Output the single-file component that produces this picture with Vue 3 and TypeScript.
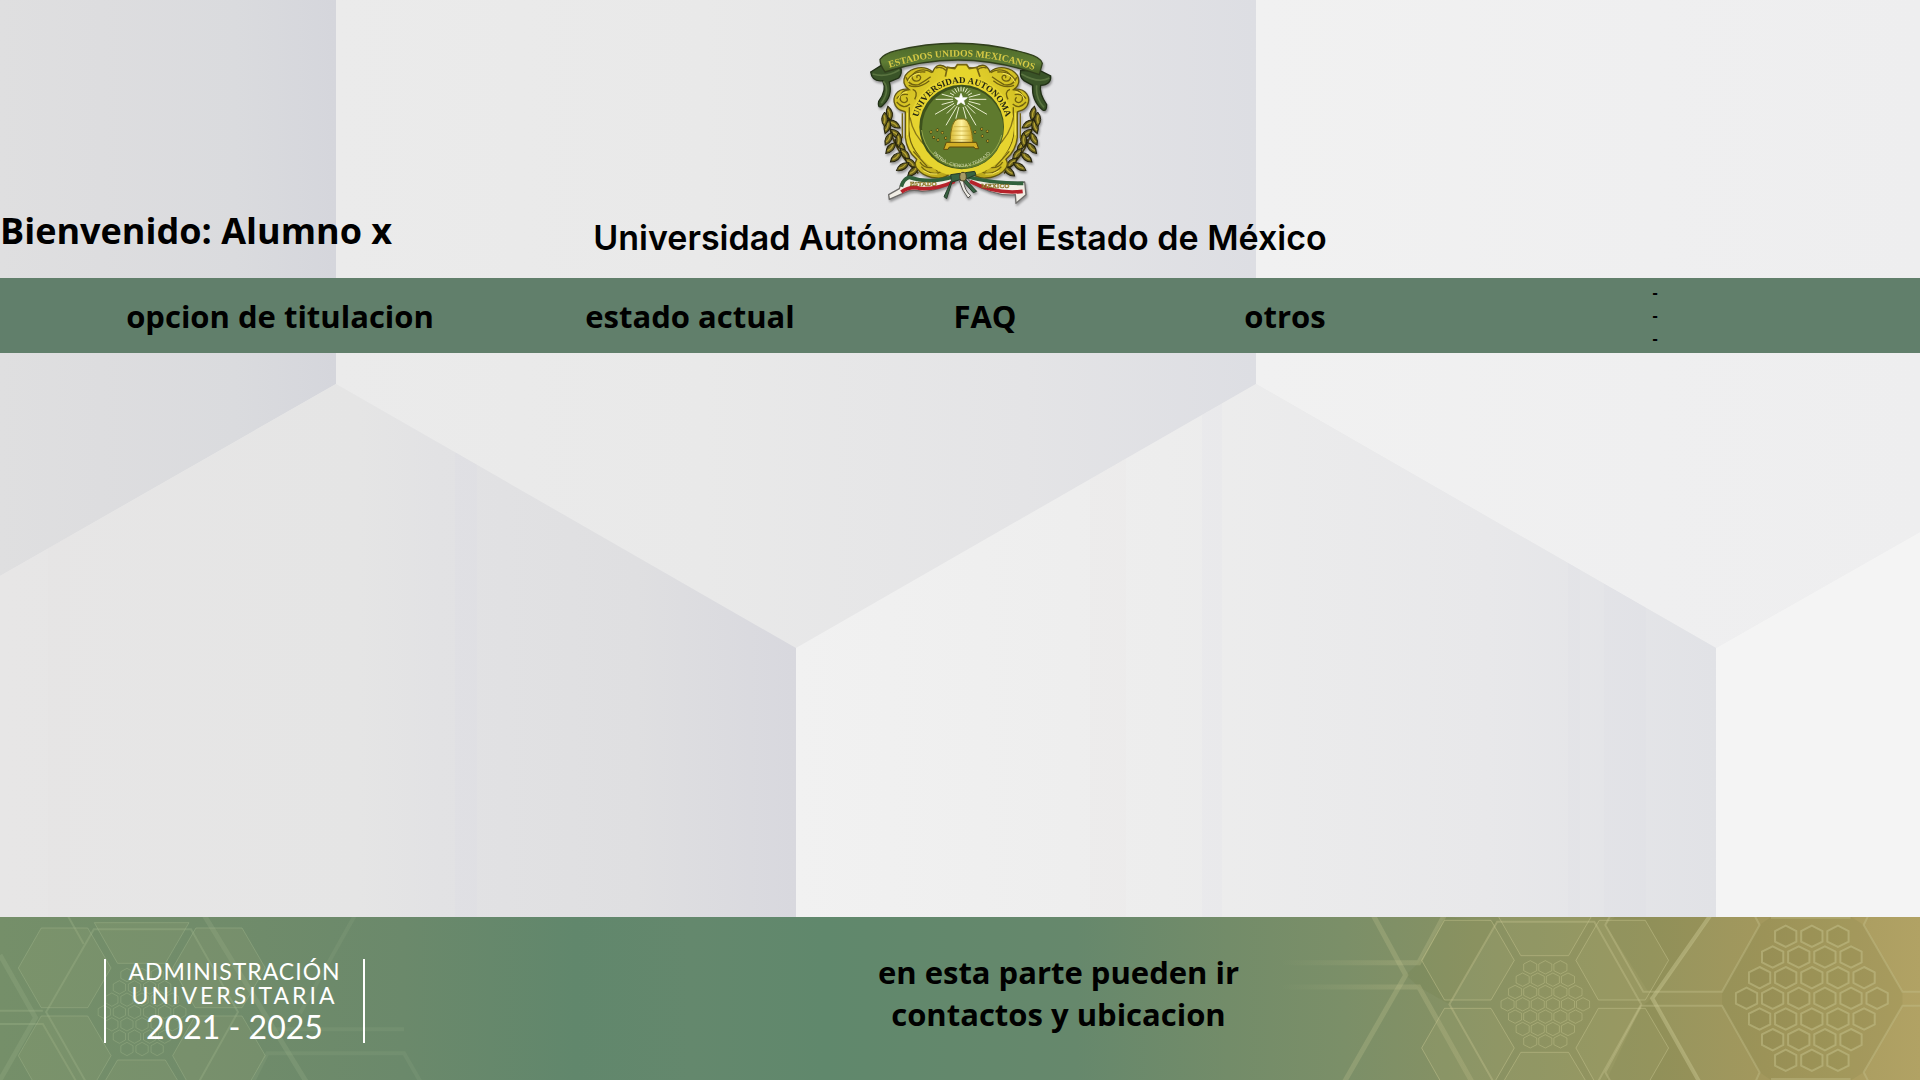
<script setup lang="ts">
interface Cell {
  x: number
  y: number
}

const links = ['opcion de titulacion', 'estado actual', 'FAQ', 'otros']
const rowCounts = [3, 4, 5, 6, 5, 4, 3]

function honeycomb(cx: number, cy: number, dx: number, dy: number): Cell[] {
  return rowCounts.flatMap((count, row) =>
    Array.from({ length: count }, (_, i) => ({
      x: cx + (i - (count - 1) / 2) * dx,
      y: cy + (row - 3) * dy,
    })),
  )
}

function hexagon(c: Cell, w: number, h: number): string {
  const half = Math.round(h / 2)
  return [
    [c.x, c.y - h],
    [c.x + w, c.y - half],
    [c.x + w, c.y + half],
    [c.x, c.y + h],
    [c.x - w, c.y + half],
    [c.x - w, c.y - half],
  ]
    .map((p) => p.join(','))
    .join(' ')
}

const smallCells = honeycomb(650, 313, 37, 37)
const largeCells = honeycomb(1303, 295, 64, 62)

const petals = [
  '533,45 590,167 707,167 765,45',
  '725,181 782,61 895,61 952,181 895,300 780,300',
  '725,444 780,325 895,325 952,444 895,565 780,565',
  '574,181 517,61 403,61 347,181 403,300 517,300',
  '574,444 517,325 403,325 347,444 403,565 517,565',
  '533,575 590,457 707,457 765,575',
]

const rays = Array.from({ length: 24 }, (_, i) => {
  const a = (i * 15 * Math.PI) / 180
  const far = i % 2 ? 60 : i > 0 && i < 12 ? 90 : 76
  const reach = Math.sin(a) < -0.3 ? 38 : far
  return {
    x1: 333 + 24 * Math.cos(a),
    y1: 208 + 24 * Math.sin(a),
    x2: 333 + reach * Math.cos(a),
    y2: 208 + reach * Math.sin(a),
  }
}).filter((_, i) => i !== 6)

const leaves = [
  [118, 250, 8], [132, 282, -38], [112, 290, 38], [138, 312, -30], [116, 326, 48],
  [150, 345, -25], [122, 354, 62], [165, 372, -20], [138, 382, 70], [182, 398, -30],
  [158, 410, 78], [190, 424, 70], [104, 268, 20], [146, 330, 20],
]
const bees = [
  [243, 306], [262, 300], [251, 322], [277, 308], [287, 324], [264, 330],
  [395, 297], [412, 304], [397, 318], [413, 333], [375, 306],
]
</script>

<template>
  <div class="page">
    <svg class="backdrop" viewBox="0 0 1920 1080" preserveAspectRatio="none" aria-hidden="true">
      <defs>
        <linearGradient id="pa">
          <stop offset="0" stop-color="#dfdfe0" />
          <stop offset=".3" stop-color="#dddddf" />
          <stop offset=".7" stop-color="#dadbde" />
          <stop offset="1" stop-color="#d5d6dc" />
        </linearGradient>
        <linearGradient id="pb">
          <stop offset="0" stop-color="#ebebeb" />
          <stop offset=".4" stop-color="#e9e9e9" />
          <stop offset=".75" stop-color="#e4e4e6" />
          <stop offset="1" stop-color="#dddee3" />
        </linearGradient>
        <linearGradient id="pc">
          <stop offset="0" stop-color="#f1f1f1" />
          <stop offset=".6" stop-color="#efeff0" />
          <stop offset="1" stop-color="#eeeeef" />
        </linearGradient>
        <linearGradient id="pd">
          <stop offset="0" stop-color="#e7e6e6" />
          <stop offset=".45" stop-color="#e5e5e5" />
          <stop offset=".55" stop-color="#e2e2e4" />
          <stop offset=".8" stop-color="#dfdfe1" />
          <stop offset="1" stop-color="#d8d8de" />
        </linearGradient>
        <linearGradient id="pe">
          <stop offset="0" stop-color="#f1f1f1" />
          <stop offset=".4" stop-color="#ededed" />
          <stop offset=".75" stop-color="#e8e8ea" />
          <stop offset="1" stop-color="#e1e2e6" />
        </linearGradient>
        <clipPath id="lowerPanels">
          <polygon points="0,576 336,384 796,648 1256,384 1716,648 1716,1080 0,1080" />
        </clipPath>
      </defs>
      <rect width="1920" height="1080" fill="#e8e8e9" />
      <polygon points="0,0 336,0 336,384 0,576" fill="url(#pa)" />
      <polygon points="336,0 1256,0 1256,384 796,648 336,384" fill="url(#pb)" />
      <polygon points="1256,0 1920,0 1920,532 1716,648 1256,384" fill="url(#pc)" />
      <polygon points="0,576 336,384 796,648 796,1080 0,1080" fill="url(#pd)" />
      <polygon points="796,648 1256,384 1716,648 1716,1080 796,1080" fill="url(#pe)" />
      <polygon points="1716,648 1920,532 1920,1080 1716,1080" fill="#f4f4f4" />
      <g clip-path="url(#lowerPanels)" fill-opacity=".04">
        <path d="M48 0h22v1080H48z M1090 0h36v1080h-36z" fill="#e8c8cc" />
        <path d="M455 0h22v1080h-22z M1202 0h20v1080h-20z M1568 0h12v1080h-12z M1604 0h42v1080h-42z" fill="#b8bcdc" />
      </g>
    </svg>

    <header class="header">
      <p class="welcome">Bienvenido: Alumno x</p>
      <div class="brand">
        <svg class="crest" viewBox="0 0 660 540" role="img" aria-label="Escudo de la universidad">
          <defs>
            <linearGradient id="gold" x1="0" y1="0" x2="1" y2="1">
              <stop offset="0" stop-color="#c9b61c" />
              <stop offset=".5" stop-color="#e4d22e" />
              <stop offset="1" stop-color="#a89312" />
            </linearGradient>
            <linearGradient id="band" x1="0" y1="0" x2="0" y2="1">
              <stop offset="0" stop-color="#4b6828" />
              <stop offset=".6" stop-color="#5e7c34" />
              <stop offset="1" stop-color="#425a22" />
            </linearGradient>
            <linearGradient id="hive">
              <stop offset="0" stop-color="#d8b830" />
              <stop offset=".5" stop-color="#fff3a0" />
              <stop offset="1" stop-color="#cda922" />
            </linearGradient>
            <path id="arcTop" d="M98 121 Q335 34 572 128" />
            <path id="arcRing" d="M200 285 A136 138 0 0 1 471 285" />
            <path id="arcMotto" d="M230 338 A113 116 0 0 0 440 338" />
            <g id="branch">
              <path d="M116 250 Q114 350 205 430" fill="none" stroke="#433b10" stroke-width="5" />
              <g v-for="(l, i) in leaves" :key="i" :transform="`translate(${l[0]} ${l[1]}) rotate(${l[2] - 20})`">
                <path d="M0 -22 Q18 0 0 22 Q-18 0 0 -22Z" fill="#6c641d" stroke="#24220d" stroke-width="3" />
                <path d="M-2 -12 Q4 0 -2 12" fill="none" stroke="#b5a235" stroke-width="4" />
              </g>
            </g>
            <g id="scroll">
              <path
                d="M292 115 Q262 92 248 126 C222 104 184 112 166 136 C154 160 168 172 176 178
                   C140 174 124 202 136 226 C148 246 160 240 166 246 L166 322 Q170 362 200 388
                   C184 414 222 442 260 444 Q290 446 304 426 L334 426 L334 110Z"
                fill="url(#gold)" stroke="#635711" stroke-width="4"
              />
              <g fill="none" stroke="#71620f" stroke-width="4">
                <path d="M246 128 C226 114 196 118 186 138 C184 158 212 158 212 142 C208 130 196 138 202 144" />
                <path d="M168 142 Q178 170 206 164 Q226 152 242 140" />
                <path d="M172 150 Q190 122 226 126 M176 166 Q206 178 238 152 M140 206 Q152 190 174 194" />
                <path d="M178 180 C160 178 146 194 152 212 C164 226 180 210 168 202 M140 216 Q160 240 180 222" />
                <path d="M188 178 Q206 184 194 208 M178 232 V318 Q184 354 212 382 M157 250 V325" />
                <path d="M210 396 C224 420 260 416 264 400 M214 410 C240 440 280 432 276 414 C266 402 250 420 264 424" />
                <path d="M190 364 L232 410 M224 374 L246 402 M258 114 Q276 108 288 122" />
              </g>
              <path d="M174 156 Q184 132 210 130 M146 206 Q152 186 172 186 M172 248 V316 M220 422 Q240 436 262 432" fill="none" stroke="#f6e75c" stroke-width="3" />
            </g>
          </defs>

          <use href="#branch" />
          <use href="#branch" transform="translate(667) scale(-1 1)" />
          <use href="#scroll" />
          <use href="#scroll" transform="translate(668) scale(-1 1)" />
          <path d="M286 148 L292 112 L314 116 L322 104 L350 104 L358 116 L380 112 L390 148 L334 440 L300 430Z" fill="#e6d52c" />
          <path d="M286 140 L292 112 L314 116 L322 104 L350 104 L358 116 L380 112 L390 140" fill="none" stroke="#756512" stroke-width="5" />
          <ellipse cx="335" cy="288" rx="157" ry="151" fill="#e6d42f" />
          <path d="M180 262 A157 151 0 0 0 490 262" fill="none" stroke="#887818" stroke-width="4" />
          <circle cx="335" cy="291" r="127" fill="#3d511c" />
          <circle cx="338" cy="294" r="122" fill="#5f7a2e" />
          <path d="M215 300 A122 122 0 0 0 455 315" fill="none" stroke="#95a74c" stroke-width="3" />
          <g stroke="#e9edcf" stroke-width="3">
            <line v-for="(r, i) in rays" :key="i" :x1="r.x1" :y1="r.y1" :x2="r.x2" :y2="r.y2" />
          </g>
          <path d="M333 190 L338 203 L352 203 L341 212 L345 225 L333 217 L321 225 L325 212 L314 203 L328 203Z" fill="#fff" stroke="#fff" stroke-width="2" />
          <g v-for="(b, i) in bees" :key="i" :transform="`translate(${b[0]} ${b[1]})`">
            <path d="M-4 -2 L3 3 M2 -4 L-2 4" stroke="#342d0a" stroke-width="4" />
            <circle r="3" fill="#c2a32c" />
          </g>
          <path d="M300 340 Q302 270 324 267 H342 Q364 272 369 340Z" fill="url(#hive)" stroke="#846f14" stroke-width="3" />
          <path d="M312 290 H354 M306 303 H361 M303 316 H365 M301 329 H368" stroke="#c4a83a" stroke-width="2" />
          <path d="M289 337 H379 L386 356 H375 L372 351 H298 L294 358 H281Z" fill="#d2ae25" stroke="#5d4b0e" stroke-width="3" />
          <text class="ring" font-size="27"><textPath href="#arcRing" startOffset="50%">UNIVERSIDAD AUTONOMA</textPath></text>
          <text class="motto" font-size="14"><textPath href="#arcMotto" startOffset="50%">PATRIA · CIENCIA Y TRABAJO</textPath></text>

          <g fill="#3a5428" stroke="#202f15" stroke-width="4">
            <path d="M94 106 L62 126 Q66 156 98 152 Q112 180 86 214 Q82 234 94 230 Q130 200 118 156 L146 144 Q158 130 152 112Z" />
            <path d="M570 122 L602 138 Q604 164 572 166 Q566 188 590 224 Q590 246 578 240 Q544 212 548 166 L522 152 Q508 142 512 122Z" />
          </g>
          <path d="M68 132 Q108 144 148 120 M100 154 Q122 180 94 220 M514 132 Q566 162 598 144 M560 166 Q556 206 582 232" fill="none" stroke="#5a7440" stroke-width="5" />
          <path d="M90 88 Q104 70 138 62 Q334 14 530 70 Q574 82 577 100 L568 134 Q334 50 105 126 Q90 106 90 88Z" fill="url(#band)" stroke="#303f1c" stroke-width="4" />
          <text class="motto-band" font-size="29"><textPath href="#arcTop" startOffset="50%">ESTADOS UNIDOS MEXICANOS</textPath></text>

          <g stroke="#6d6b68" stroke-width="4" stroke-linejoin="round">
            <path d="M318 436 Q240 464 174 440 Q154 448 148 476 L116 494 L118 508 L164 488 Q184 476 216 484 Q272 482 318 452Z" fill="#f1eee5" />
            <path d="M348 438 Q424 462 524 456 L528 494 L498 520 L496 494 Q430 500 362 456Z" fill="#f1eee5" />
          </g>
          <g fill="none" stroke-width="11">
            <path d="M316 438 Q242 464 177 442 Q160 448 154 470" stroke="#31613b" />
            <path d="M314 454 Q260 478 214 476 Q180 466 154 486" stroke="#b6232b" />
            <path d="M352 440 Q424 460 520 460" stroke="#31613b" />
            <path d="M360 454 Q440 494 518 484" stroke="#b6232b" />
          </g>
          <path d="M302 434 L330 430 L334 448 L306 456 L290 506 L282 500 L304 452Z M346 428 L374 424 L378 434 L346 448 L380 484 L370 488 L338 452Z" fill="#386342" stroke="#253b29" stroke-width="3" />
          <path d="M340 450 Q344 484 362 496 L354 504 Q336 482 328 452Z" fill="#eceae4" stroke="#55534f" stroke-width="3" />
          <ellipse cx="339" cy="440" rx="10" ry="13" fill="#a79a65" stroke="#443d22" stroke-width="3" />
          <text class="ribbon" x="220" y="468" font-size="20">ESTADO</text>
          <text class="ribbon" x="436" y="474" font-size="20">MEXICO</text>
        </svg>
        <h1 class="title">Universidad Autónoma del Estado de México</h1>
      </div>
    </header>

    <nav class="nav">
      <a v-for="link in links" :key="link" href="#">{{ link }}</a>
      <button class="more" type="button" aria-label="Más opciones">
        <span v-for="n in 3" :key="n">-</span>
      </button>
    </nav>

    <main class="content"></main>

    <footer class="footer">
      <div class="patterns" aria-hidden="true">
        <svg class="pattern" viewBox="0 51 1568 489" preserveAspectRatio="none">
          <g class="faint">
            <path class="thick" d="M0 165 L87 353 L0 540 M500 45 L750 545" />
            <path class="ghost" d="M870 45 L735 340 M670 388 H990 M620 545 L655 460 H990 L1030 545" />
            <path class="medium" d="M0 332 H105 M0 372 H105 L187 545 M165 45 L205 132" />
            <g transform="translate(-302 23)">
              <polygon v-for="p in petals" :key="p" class="petal" :points="p" />
              <polygon class="medium" points="415,313 532,65 770,65 885,313 770,565 532,565" />
              <polygon v-for="(c, i) in smallCells" :key="i" class="cell" :points="hexagon(c, 15, 20)" />
            </g>
          </g>
        </svg>
        <svg class="pattern" viewBox="0 51 1568 489" preserveAspectRatio="none">
          <defs>
            <linearGradient id="fade" gradientUnits="userSpaceOnUse" x1="0" y1="0" x2="340" y2="0">
              <stop offset="0" stop-color="#c9c792" stop-opacity="0" />
              <stop offset="1" stop-color="#c9c792" />
            </linearGradient>
          </defs>
          <g class="shade">
            <path d="M403 51 L340 188 L308 225 L340 261 L415 313 L532 65Z" />
            <path d="M798 75 L820 51 H1055 L912 295Z M912 295 L1025 540 H800 L885 320Z" />
            <path d="M1175 75 L1203 51 H1400 L1430 75 L1525 275 V317 L1430 517 L1400 540 H1203 L1175 517 L1083 317 V275Z" />
          </g>
          <g>
            <path class="thick" d="M228 45 L308 225 L158 545" />
            <path class="strong" d="M1055 45 L912 295 L1027 545" />
            <path class="thick" stroke="url(#fade)" d="M0 188 H340 L403 45 M0 261 H340 L470 545" />
            <polygon v-for="p in petals" :key="p" class="petal" :points="p" />
            <polygon class="medium" points="415,313 532,65 770,65 885,313 770,565 532,565" />
            <polygon v-for="(c, i) in smallCells" :key="i" class="cell" :points="hexagon(c, 16, 20)" />
            <path class="medium" d="M1162 45 L1175 75 L1083 275 H890 L797 75 L810 45 M1165 545 L1175 517 L1083 317 H885 L797 517 L810 545" />
            <path class="medium" d="M1442 45 L1430 75 L1525 275 H1570 M1442 545 L1430 517 L1525 317 H1570 M1203 53 H1398 M1203 537 H1398" />
            <polygon v-for="(c, i) in largeCells" :key="`l${i}`" class="large" :points="hexagon(c, 26, 32)" />
          </g>
        </svg>
      </div>
      <div class="administration">
        <span class="line-one">ADMINISTRACIÓN</span>
        <span class="line-two">UNIVERSITARIA</span>
        <span class="years">2021 - 2025</span>
      </div>
      <p class="contact">en esta parte pueden ir<br />contactos y ubicacion</p>
    </footer>
  </div>
</template>

<style>
body {
  margin: 0;
}
</style>

<style scoped>
.page {
  position: relative;
  display: grid;
  grid-template-rows: auto auto 1fr auto;
  min-height: 100vh;
  overflow: hidden;
  color: #000;
  font-family: 'Open Sans', 'Noto Sans', sans-serif;
}
.backdrop {
  position: absolute;
  inset: 0;
  z-index: -1;
  width: 100%;
  height: 100%;
}
.header {
  display: grid;
  grid-template-columns: 1fr auto 1fr;
  align-items: end;
  padding: 30px 0 16px;
}
.welcome {
  margin: 0 0 7px;
  font-size: 36px;
  font-weight: 700;
  line-height: 48px;
}
.brand {
  display: flex;
  flex-direction: column;
  align-items: center;
  gap: 4px;
}
.crest {
  display: block;
  width: 220px;
  height: 180px;
  filter: drop-shadow(1px 2px 1px rgb(0 0 0 / 35%));
}
.crest text {
  text-anchor: middle;
  font-family: 'Liberation Serif', serif;
}
.crest .ring {
  fill: #242611;
  font-weight: 700;
}
.crest .motto {
  fill: #d7ddb5;
  font-family: 'Liberation Sans', sans-serif;
}
.crest .motto-band {
  fill: #d5c945;
  font-weight: 700;
}
.crest .ribbon {
  fill: #cbb452;
  stroke: #6e5d1d;
  stroke-width: 1px;
  font-weight: 700;
}
.title {
  margin: 0;
  font-family: Inter, sans-serif;
  font-size: 34px;
  font-weight: 600;
  line-height: 48px;
  white-space: nowrap;
}
.nav {
  display: grid;
  grid-template-columns: 56fr 26fr 33fr 27fr 47fr 3fr;
  align-items: center;
  justify-items: center;
  min-height: 75px;
  background: #617f6b;
}
.nav a {
  color: inherit;
  font-size: 31px;
  font-weight: 700;
  line-height: 42px;
  text-decoration: none;
  white-space: nowrap;
}
.more {
  display: flex;
  flex-direction: column;
  padding: 0;
  border: 0;
  background: none;
  color: inherit;
  font: 700 16px/23px 'Open Sans', sans-serif;
}
.footer {
  position: relative;
  display: grid;
  grid-template-columns: 470px 1fr 273px;
  align-items: start;
  min-height: 163px;
  background: linear-gradient(90deg, #758f69 0%, #718c6a 10%, #6b896b 21%, #61876c 30%, #64886d 36%, #60886c 43%, #66886c 56%, #738c69 64%, #7b8f68 70%, #8a9262 78%, #96955e 86%, #a3985d 92%, #b1a264 100%);
}
.patterns {
  position: absolute;
  inset: 0;
  display: flex;
  justify-content: space-between;
}
.pattern {
  width: 640px;
  height: 100%;
  fill: none;
  stroke: #c9c792;
}
.pattern path,
.pattern polygon {
  vector-effect: non-scaling-stroke;
}
.shade {
  fill: #5f6f35;
  fill-opacity: 0.1;
  stroke: none;
}
.faint {
  stroke: #a9bd92;
  opacity: 0.8;
}
.thick {
  stroke-width: 5px;
  stroke-opacity: 0.25;
}
.strong {
  stroke-width: 4px;
  stroke-opacity: 0.45;
}
.ghost {
  stroke-width: 4px;
  stroke-opacity: 0.15;
}
.medium {
  stroke-width: 2px;
  stroke-opacity: 0.35;
}
.petal {
  fill: #b5b878;
  fill-opacity: 0.12;
  stroke-width: 1px;
  stroke-opacity: 0.45;
}
.cell {
  stroke-width: 1px;
  stroke-opacity: 0.4;
}
.large {
  fill: #6c6530;
  fill-opacity: 0.08;
  stroke-width: 2px;
  stroke-opacity: 0.45;
}
.administration {
  position: relative;
  display: flex;
  flex-direction: column;
  align-items: center;
  box-sizing: border-box;
  width: 261px;
  height: 84px;
  margin: 42px 0 0 104px;
  border: solid #fff;
  border-width: 0 2px;
  color: #fff;
  font-family: Lato, 'Open Sans', sans-serif;
}
.line-one,
.line-two {
  font-size: 23px;
  line-height: 24px;
  letter-spacing: 1px;
}
.line-two {
  letter-spacing: 3px;
}
.years {
  font-size: 32px;
  line-height: 40px;
}
.contact {
  position: relative;
  margin: 34px 0 0;
  font-size: 31px;
  font-weight: 700;
  line-height: 42px;
  text-align: center;
}
</style>
